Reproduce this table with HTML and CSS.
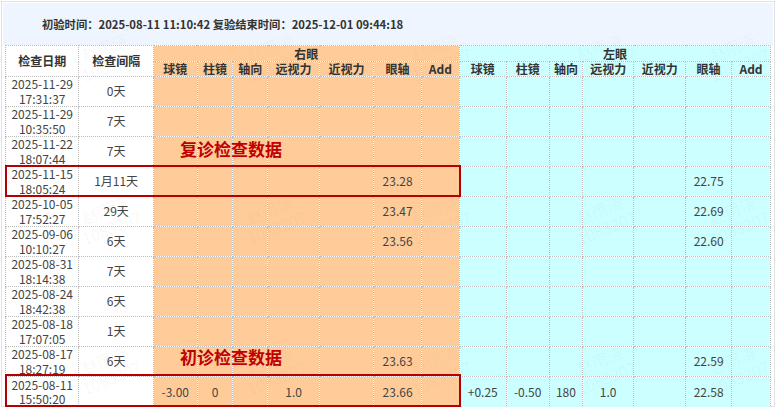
FILE: index.html
```html
<!DOCTYPE html>
<html lang="zh">
<head>
<meta charset="utf-8">
<link rel="stylesheet" href="styles.css">
</head>
<body>
<div class="frame">
  <div class="band">初验时间：2025-08-11 11:10:42 复验结束时间：2025-12-01 09:44:18</div>
  <div class="sheet">
    <table class="grid">
      <colgroup>
        <col style="width:72px"><col style="width:73px">
        <col style="width:43px"><col style="width:35px"><col style="width:34px"><col style="width:51px"><col style="width:53px"><col style="width:47px"><col style="width:37px">
        <col style="width:46px"><col style="width:42px"><col style="width:33px"><col style="width:50px"><col style="width:51px"><col style="width:45px"><col style="width:38px">
      </colgroup>
      <thead>
        <tr class="h1">
          <th rowspan="2" class="w">检查日期</th>
          <th rowspan="2" class="w">检查间隔</th>
          <th colspan="7" class="r">右眼</th>
          <th colspan="7" class="l">左眼</th>
        </tr>
        <tr class="h2">
          <th class="r">球镜</th><th class="r">柱镜</th><th class="r">轴向</th><th class="r">远视力</th><th class="r">近视力</th><th class="r">眼轴</th><th class="r">Add</th>
          <th class="l">球镜</th><th class="l">柱镜</th><th class="l">轴向</th><th class="l">远视力</th><th class="l">近视力</th><th class="l">眼轴</th><th class="l">Add</th>
        </tr>
      </thead>
      <tbody>
        <tr><td class="w"><span class="d">2025-11-29</span><span class="d">17:31:37</span></td><td class="w">0天</td><td class="r"></td><td class="r"></td><td class="r"></td><td class="r"></td><td class="r"></td><td class="r"></td><td class="r"></td><td class="l"></td><td class="l"></td><td class="l"></td><td class="l"></td><td class="l"></td><td class="l"></td><td class="l"></td></tr>
        <tr><td class="w"><span class="d">2025-11-29</span><span class="d">10:35:50</span></td><td class="w">7天</td><td class="r"></td><td class="r"></td><td class="r"></td><td class="r"></td><td class="r"></td><td class="r"></td><td class="r"></td><td class="l"></td><td class="l"></td><td class="l"></td><td class="l"></td><td class="l"></td><td class="l"></td><td class="l"></td></tr>
        <tr><td class="w"><span class="d">2025-11-22</span><span class="d">18:07:44</span></td><td class="w">7天</td><td class="r"></td><td class="r"></td><td class="r"></td><td class="r"></td><td class="r"></td><td class="r"></td><td class="r"></td><td class="l"></td><td class="l"></td><td class="l"></td><td class="l"></td><td class="l"></td><td class="l"></td><td class="l"></td></tr>
        <tr><td class="w"><span class="d">2025-11-15</span><span class="d">18:05:24</span></td><td class="w">1月11天</td><td class="r"></td><td class="r"></td><td class="r"></td><td class="r"></td><td class="r"></td><td class="r">23.28</td><td class="r"></td><td class="l"></td><td class="l"></td><td class="l"></td><td class="l"></td><td class="l"></td><td class="l">22.75</td><td class="l"></td></tr>
        <tr><td class="w"><span class="d">2025-10-05</span><span class="d">17:52:27</span></td><td class="w">29天</td><td class="r"></td><td class="r"></td><td class="r"></td><td class="r"></td><td class="r"></td><td class="r">23.47</td><td class="r"></td><td class="l"></td><td class="l"></td><td class="l"></td><td class="l"></td><td class="l"></td><td class="l">22.69</td><td class="l"></td></tr>
        <tr><td class="w"><span class="d">2025-09-06</span><span class="d">10:10:27</span></td><td class="w">6天</td><td class="r"></td><td class="r"></td><td class="r"></td><td class="r"></td><td class="r"></td><td class="r">23.56</td><td class="r"></td><td class="l"></td><td class="l"></td><td class="l"></td><td class="l"></td><td class="l"></td><td class="l">22.60</td><td class="l"></td></tr>
        <tr><td class="w"><span class="d">2025-08-31</span><span class="d">18:14:38</span></td><td class="w">7天</td><td class="r"></td><td class="r"></td><td class="r"></td><td class="r"></td><td class="r"></td><td class="r"></td><td class="r"></td><td class="l"></td><td class="l"></td><td class="l"></td><td class="l"></td><td class="l"></td><td class="l"></td><td class="l"></td></tr>
        <tr><td class="w"><span class="d">2025-08-24</span><span class="d">18:42:38</span></td><td class="w">6天</td><td class="r"></td><td class="r"></td><td class="r"></td><td class="r"></td><td class="r"></td><td class="r"></td><td class="r"></td><td class="l"></td><td class="l"></td><td class="l"></td><td class="l"></td><td class="l"></td><td class="l"></td><td class="l"></td></tr>
        <tr><td class="w"><span class="d">2025-08-18</span><span class="d">17:07:05</span></td><td class="w">1天</td><td class="r"></td><td class="r"></td><td class="r"></td><td class="r"></td><td class="r"></td><td class="r"></td><td class="r"></td><td class="l"></td><td class="l"></td><td class="l"></td><td class="l"></td><td class="l"></td><td class="l"></td><td class="l"></td></tr>
        <tr><td class="w"><span class="d">2025-08-17</span><span class="d">18:27:19</span></td><td class="w">6天</td><td class="r"></td><td class="r"></td><td class="r"></td><td class="r"></td><td class="r"></td><td class="r">23.63</td><td class="r"></td><td class="l"></td><td class="l"></td><td class="l"></td><td class="l"></td><td class="l"></td><td class="l">22.59</td><td class="l"></td></tr>
        <tr class="last"><td class="w"><span class="d">2025-08-11</span><span class="d">15:50:20</span></td><td class="w"></td><td class="r">-3.00</td><td class="r">0</td><td class="r"></td><td class="r">1.0</td><td class="r"></td><td class="r">23.66</td><td class="r"></td><td class="l">+0.25</td><td class="l">-0.50</td><td class="l">180</td><td class="l">1.0</td><td class="l"></td><td class="l">22.58</td><td class="l"></td></tr>
      </tbody>
    </table>

    <div class="wm" style="left:72px;top:-8px">赵雨浇<br>1083207</div>
    <div class="wm" style="left:237px;top:-8px">赵雨浇<br>1083207</div>
    <div class="wm" style="left:402px;top:-8px">赵雨浇<br>1083207</div>
    <div class="wm" style="left:567px;top:-8px">赵雨浇<br>1083207</div>
    <div class="wm" style="left:700px;top:-8px">赵雨浇<br>1083207</div>
    <div class="wm" style="left:72px;top:155px">赵雨浇<br>1083207</div>
    <div class="wm" style="left:237px;top:155px">赵雨浇<br>1083207</div>
    <div class="wm" style="left:402px;top:155px">赵雨浇<br>1083207</div>
    <div class="wm" style="left:567px;top:155px">赵雨浇<br>1083207</div>
    <div class="wm" style="left:700px;top:155px">赵雨浇<br>1083207</div>
    <div class="wm" style="left:72px;top:305px">赵雨浇<br>1083207</div>
    <div class="wm" style="left:237px;top:305px">赵雨浇<br>1083207</div>
    <div class="wm" style="left:402px;top:305px">赵雨浇<br>1083207</div>
    <div class="wm" style="left:567px;top:305px">赵雨浇<br>1083207</div>
    <div class="wm" style="left:700px;top:305px">赵雨浇<br>1083207</div>

    <div class="mark mark-re"></div>
    <div class="mark mark-first"></div>
    <div class="note note-re">复诊检查数据</div>
    <div class="note note-first">初诊检查数据</div>
  </div>
</div>
</body>
</html>
```

FILE: styles.css
```css
html, body {
  margin: 0;
  padding: 0;
  background: #ffffff;
}

body {
  font-family: "Noto Sans CJK SC", "Noto Sans", sans-serif;
  color: #444;
  font-size: 12px;
}

.frame {
  margin: 1px 2px 0 1px;
  width: 774px;
  height: 406px;
  border: 1px solid #e2e2e2;
  box-sizing: border-box;
  background: #fff;
}

.band {
  margin: 1px 1px 0 1px;
  height: 42px;
  background: #eef5fe;
  box-sizing: border-box;
  padding-left: 39px;
  line-height: 42px;
  font-weight: bold;
  font-size: 11.3px;
  color: #333;
  white-space: nowrap;
}

.sheet {
  position: relative;
  margin-left: 3px;
  width: 767px;
}

.grid {
  border-collapse: collapse;
  table-layout: fixed;
  width: 766px;
  border-top: 1px dotted #c4c4c4;
}

.grid th,
.grid td {
  border: 1px dotted #bdbdbd;
  padding: 0;
  text-align: center;
  vertical-align: middle;
  overflow: hidden;
  white-space: nowrap;
  line-height: 14px;
}

.grid th {
  font-weight: bold;
  color: #333;
  font-size: 12px;
}

.h1 th { height: 15px; }
.h2 th { height: 14px; }

.grid tbody td {
  height: 29px;
  color: #444;
  line-height: 14.5px;
}
.grid tbody tr.last td { height: 30px; }

.d {
  display: block;
  height: 14.5px;
  line-height: 14.5px;
  overflow: visible;
}

.w { background: #ffffff; }
.r { background: #ffcc99; }
.l { background: #ccffff; }

.wm {
  position: absolute;
  color: rgba(120, 120, 120, 0.06);
  font-size: 16px;
  line-height: 19px;
  transform: rotate(-22deg);
  pointer-events: none;
  white-space: nowrap;
  text-align: center;
}

.mark {
  position: absolute;
  left: 0;
  width: 456px;
  border: 2px solid #b40000;
  box-sizing: border-box;
  pointer-events: none;
}

.mark-re { top: 120px; height: 32px; }
.mark-first { top: 329px; height: 33px; }

.note {
  position: absolute;
  left: 175px;
  font-size: 17px;
  font-weight: bold;
  color: #c00000;
  line-height: 22px;
  white-space: nowrap;
}

.note-re { top: 93px; }
.note-first { top: 301px; }
```
